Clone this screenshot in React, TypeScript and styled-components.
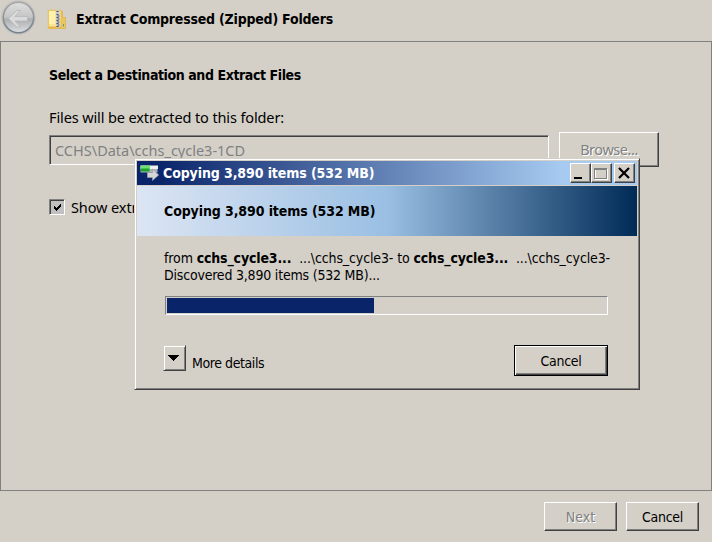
import React from "react";
import styled, { createGlobalStyle, css } from "styled-components";

const face = "#d4d0c8";
const shadow = "#808080";
const dark = "#404040";

const GlobalStyle = createGlobalStyle`
  *, *::before, *::after { box-sizing: border-box; }
  body { margin: 0; background: ${face}; overflow: hidden; }
  button { appearance: none; margin: 0; padding: 0; border-radius: 0; }
  svg { display: block; }
`;

const tahoma = css`
  font-family: "DejaVu Sans Condensed", "DejaVu Sans", sans-serif;
  font-stretch: condensed;
`;
const segoe = css`
  font-family: "Noto Sans", sans-serif;
`;
const raised = css`
  border: 1px solid;
  border-color: #fff ${dark} ${dark} #fff;
  box-shadow: inset -1px -1px 0 ${shadow};
  background: ${face};
`;

const Wizard = styled.main`
  position: relative;
  width: 712px;
  height: 542px;
  display: flex;
  flex-direction: column;
  background: ${face};
  color: #000;
`;

const Header = styled.header`
  height: 41px;
  display: flex;
  align-items: flex-start;
`;

const FolderIcon = styled.svg`
  margin: 9px 0 0 11px;
`;

const Text = styled.span<{ $size?: number; $track?: number; $bold?: boolean; $segoe?: boolean }>`
  ${(p) => (p.$segoe ? segoe : tahoma)}
  font-size: ${(p) => p.$size ?? 14}px;
  font-weight: ${(p) => (p.$bold ? 700 : 400)};
  letter-spacing: ${(p) => p.$track ?? 0}px;
  line-height: 18px;
  white-space: pre;
`;

const HeaderTitle = styled(Text)`
  margin: 10px 0 0 9px;
`;

const Panel = styled.section`
  height: 450px;
  border: 1px solid ${shadow};
  padding: 24px 0 0 48px;
  display: flex;
  flex-direction: column;
  align-items: flex-start;
`;

const FieldLabel = styled(Text)`
  margin-top: 24px;
`;

const FieldRow = styled.div`
  display: flex;
  align-items: flex-start;
  gap: 10px;
  margin-top: 6px;
`;

const PathField = styled.div`
  width: 500px;
  height: 30px;
  margin-top: 3px;
  padding: 5px 0 0 5px;
  border: 1px solid;
  border-color: ${shadow} #fff #fff ${shadow};
  box-shadow: inset 1px 1px 0 ${dark};
  color: ${shadow};
  display: flex;
`;

const Button = styled.button<{ $w: number; $h: number; $off?: boolean; $focus?: boolean }>`
  ${raised}
  width: ${(p) => p.$w}px;
  height: ${(p) => p.$h}px;
  display: flex;
  align-items: center;
  justify-content: center;
  color: ${(p) => (p.$off ? shadow : "#000")};
  text-shadow: ${(p) => (p.$off ? "1px 1px 0 #fff" : "none")};
  ${(p) =>
    p.$focus &&
    css`
      border-color: #000;
      box-shadow: inset 1px 1px 0 #fff, inset -1px -1px 0 ${dark}, inset -2px -2px 0 ${shadow};
    `}
`;

const BrowseButton = styled(Button)`
  padding-bottom: 2px;
`;

const ExpandButton = styled(Button)`
  margin-left: -1px;
  padding: 0 3px 0 0;
  border-left-color: ${face};
  border-top-color: ${face};
  box-shadow: inset 1px 1px 0 #fff, inset -1px -1px 0 ${shadow};
`;

const CheckRow = styled.label`
  display: flex;
  margin-top: 31px;
  gap: 6px;
`;

const CheckBox = styled.span`
  flex: none;
  width: 16px;
  height: 16px;
  margin-top: 1px;
  border: 1px solid;
  border-color: ${shadow} #fff #fff ${shadow};
  box-shadow: inset 1px 1px 0 ${dark};
  background: #c0c0c0;
  display: flex;
  padding: 3px 0 0 3px;
`;

const Footer = styled.footer`
  display: flex;
  justify-content: flex-end;
  gap: 9px;
  padding: 11px 13px 0 0;
`;

const Dialog = styled.section`
  position: absolute;
  left: 134px;
  top: 158px;
  width: 506px;
  height: 232px;
  padding: 2px;
  border: 1px solid;
  border-color: ${face} ${dark} ${dark} ${face};
  box-shadow: inset 1px 1px 0 #fff, inset -1px -1px 0 ${shadow};
  background: ${face};
  display: flex;
  flex-direction: column;
`;

const TitleBar = styled.header`
  height: 24px;
  display: flex;
  align-items: flex-start;
  padding: 2px 2px 0 3px;
  background: linear-gradient(90deg, #0a246a 0, #0a246a 20px, #a6caf0 425px);
  color: #fff;
`;

const DialogTitle = styled(Text)`
  margin: 1px auto 0 3px;
`;

const Caption = styled.button<{ $gap?: number }>`
  ${raised}
  width: 21px;
  height: 20px;
  margin-left: ${(p) => p.$gap ?? 0}px;
  display: flex;
`;

const Banner = styled.div`
  height: 50px;
  margin-top: 1px;
  padding: 16px 0 0 27px;
  background: linear-gradient(90deg, #dce5f3 0%, #9abfe3 50%, #002b57 100%);
`;

const DialogBody = styled.div`
  display: flex;
  flex-direction: column;
  align-items: flex-start;
  padding: 13px 0 0 27px;
`;

const Progress = styled.div`
  width: 443px;
  height: 19px;
  margin: 12px 0 0 1px;
  padding: 1px;
  border: 1px solid;
  border-color: ${shadow} #fff #fff ${shadow};
`;

const ProgressFill = styled.div`
  width: 207px;
  height: 15px;
  background: #0a246a;
`;

const Actions = styled.div`
  display: flex;
  align-items: flex-start;
  margin-top: 30px;
  width: 444px;
`;

const MoreText = styled(Text)`
  margin: 9px auto 0 6px;
`;

const Line = styled(Text)`
  margin-bottom: -1px;
`;

function BackIcon() {
  return (
    <svg width="36" height="36" viewBox="0 0 36 36">
      <defs>
        <linearGradient id="ring" x1="0" y1="0" x2="0" y2="1">
          <stop offset="0" stopColor="#a4a6a8" />
          <stop offset="1" stopColor="#74808a" />
        </linearGradient>
        <linearGradient id="orb" x1="0" y1="0" x2="0" y2="1">
          <stop offset="0" stopColor="#dedede" />
          <stop offset=".48" stopColor="#c6c6c6" />
          <stop offset=".56" stopColor="#acaeb0" />
          <stop offset="1" stopColor="#dde0e2" />
        </linearGradient>
      </defs>
      <circle cx="18.5" cy="17.5" r="17.3" fill="#c4c2be" />
      <circle cx="18.5" cy="17.5" r="15.2" fill="url(#orb)" stroke="url(#ring)" strokeWidth="1.6" />
      <path d="M8.500 18.500 16.500 10.500h4l-5.500 6H27.500v4.500H15l5.500 6h-4z" fill="#d9dada" stroke="#b5b6b7" strokeWidth=".8" />
    </svg>
  );
}

function ZipIcon() {
  return (
    <FolderIcon width="20" height="21" viewBox="0 0 20 21">
      <path d="M12 2.500h3.500v6h3v11H12z" fill="#eec75c" stroke="#d8a93c" strokeWidth=".6" />
      <path d="M1.300 1.300h12.700v18.200H1.300z" fill="#fae48d" stroke="#e3b94c" strokeWidth=".8" />
      <path d="M2 2h6v13H2z" fill="#fdf1ae" />
      <path d="M1.500 17.500h12.500v2H1.500z" fill="#e5b64a" />
      <path d="M9 1.500h3.500v17H9z" fill="#c9cbd4" />
      <path d="M9.500 2.500h2M9.500 5.500h2M10.500 7h2M9.500 8.500h2M10.500 10h2M9.500 11.500h2M10.500 13h2M9.500 14.500h2M10.500 16h2M9.500 17.500h2" stroke="#454d72" />
      <path d="M16.500 15v2.500" stroke="#5a93b0" />
    </FolderIcon>
  );
}

function CopyIcon() {
  return (
    <svg width="20" height="20" viewBox="0 0 20 20">
      <path d="M.5 2.500h17.500v3.500H.5z" fill="#eef0f0" />
      <path d="M.5 6h17v3.500H.5z" fill="#a9b4b8" />
      <path d="M.5 2.500h9.500V6H.5z" fill="#72df72" />
      <path d="M1 5.500h8.500v3H1z" fill="#18a52a" />
      <path d="M7.500 9.500h5V6L18.700 12l-6.200 5.500v-3H7.500z" fill="#d5d5d5" stroke="#9b9da3" strokeWidth=".7" />
    </svg>
  );
}

export default function App() {
  return (
    <Wizard>
      <GlobalStyle />
      <Header>
        <BackIcon />
        <ZipIcon />
        <HeaderTitle $bold $track={-0.21}>Extract Compressed (Zipped) Folders</HeaderTitle>
      </Header>

      <Panel>
        <Text $bold $track={-0.41}>Select a Destination and Extract Files</Text>
        <FieldLabel $segoe $size={14.5} $track={-0.12}>Files will be extracted to this folder:</FieldLabel>
        <FieldRow>
          <PathField>
            <Text $segoe $size={14.5}>CCHS\Data\cchs_cycle3-1CD</Text>
          </PathField>
          <BrowseButton $w={100} $h={35} $off>
            <Text $segoe $size={14.5} $track={-0.45}>Browse...</Text>
          </BrowseButton>
        </FieldRow>
        <CheckRow>
          <CheckBox>
            <svg width="9" height="9" viewBox="0 0 9 9" shapeRendering="crispEdges">
              <path d="M1 3v3h1v1h1v1h1V7h1V6h1V5h1V4h1V1H7v1H6v1H5v1H4v1H3V4H2V3z" />
            </svg>
          </CheckBox>
          <Text $segoe $size={14.5} $track={-0.1}>Show extr</Text>
        </CheckRow>
      </Panel>

      <Footer>
        <Button $w={73} $h={29} $off>
          <Text>Next</Text>
        </Button>
        <Button $w={73} $h={29}>
          <Text $track={-0.3}>Cancel</Text>
        </Button>
      </Footer>

      <Dialog>
        <TitleBar>
          <CopyIcon />
          <DialogTitle $bold $track={-0.1}>Copying 3,890 items (532 MB)</DialogTitle>
          <Caption aria-label="Minimize">
            <svg width="19" height="18" shapeRendering="crispEdges">
              <path d="M3 13h8v2H3z" />
            </svg>
          </Caption>
          <Caption aria-label="Maximize">
            <svg width="19" height="18" shapeRendering="crispEdges" fill="none">
              <path d="M3.500 5v10.500H15.500V5" stroke="#fff" />
              <path d="M2.500 14.500V5.500H14.500V14.500z" stroke={shadow} />
              <path d="M2 5h13" stroke={shadow} strokeWidth="2" />
            </svg>
          </Caption>
          <Caption aria-label="Close" $gap={2}>
            <svg width="19" height="18">
              <path d="M4 4l10 10M14 4 4 14" stroke="#000" strokeWidth="2.200" />
            </svg>
          </Caption>
        </TitleBar>
        <Banner>
          <Text $bold $track={-0.1}>Copying 3,890 items (532 MB)</Text>
        </Banner>
        <DialogBody>
          <Line $track={-0.12}>
            from <Text $bold $track={-0.15}>cchs_cycle3...</Text>
            {"  ...\\cchs_cycle3- to "}
            <Text $bold $track={-0.15}>cchs_cycle3...</Text>
            {"  ...\\cchs_cycle3-"}
          </Line>
          <Text $track={-0.2}>Discovered 3,890 items (532 MB)...</Text>
          <Progress>
            <ProgressFill />
          </Progress>
          <Actions>
            <ExpandButton $w={23} $h={26} aria-label="More details">
              <svg width="11" height="6" shapeRendering="crispEdges">
                <path d="M0 0h11L6 6H5z" />
              </svg>
            </ExpandButton>
            <MoreText $track={-0.42}>More details</MoreText>
            <Button $w={94} $h={31} $focus>
              <Text $track={-0.3}>Cancel</Text>
            </Button>
          </Actions>
        </DialogBody>
      </Dialog>
    </Wizard>
  );
}
